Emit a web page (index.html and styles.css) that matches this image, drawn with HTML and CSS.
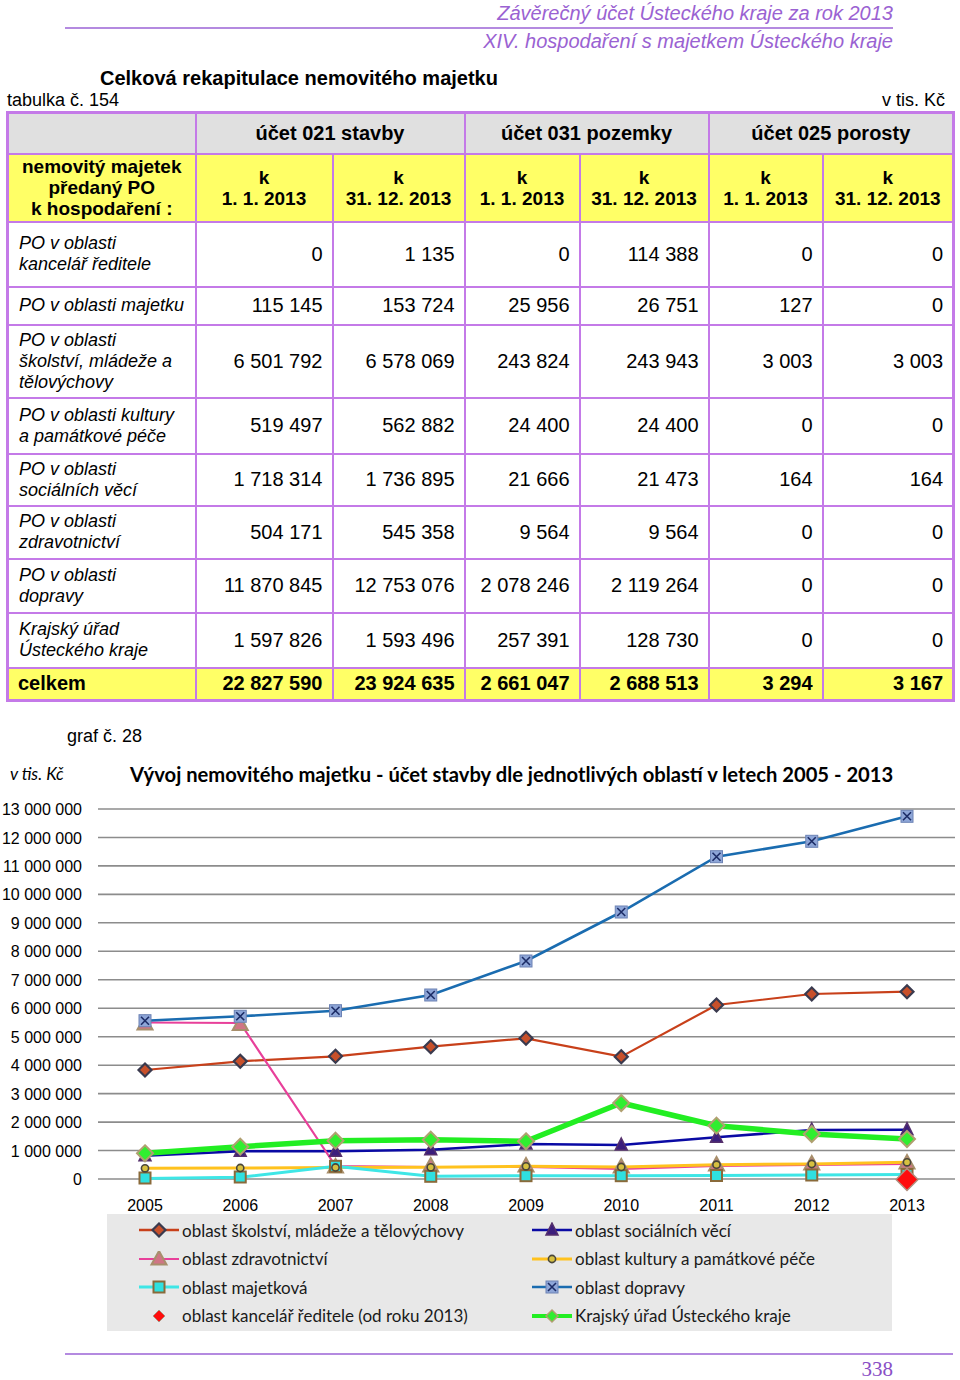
FILE: index.html
```html
<!DOCTYPE html>
<html lang="cs">
<head>
<meta charset="utf-8">
<title>Celková rekapitulace nemovitého majetku</title>
<link rel="stylesheet" href="styles.css">
</head>
<body>
<div class="page">
  <header class="doc-head">
    <div class="doc-title">Závěrečný účet Ústeckého kraje za rok 2013</div>
    <div class="doc-sub">XIV. hospodaření s majetkem Ústeckého kraje</div>
  </header>

  <h1 class="tbl-title">Celková rekapitulace nemovitého majetku</h1>
  <div class="tbl-caption"><span>tabulka č. 154</span><span>v tis. Kč</span></div>

  <table class="rekap">
    <colgroup>
      <col class="c0"><col class="c1"><col class="c2"><col class="c3"><col class="c4"><col class="c5"><col class="c6">
    </colgroup>
    <tr class="h1">
      <th></th>
      <th colspan="2">účet 021 stavby</th>
      <th colspan="2">účet 031 pozemky</th>
      <th colspan="2">účet 025 porosty</th>
    </tr>
    <tr class="h2">
      <th>nemovitý majetek<br>předaný PO<br>k hospodaření :</th>
      <th>k<br>1. 1. 2013</th>
      <th>k<br>31. 12. 2013</th>
      <th>k<br>1. 1. 2013</th>
      <th>k<br>31. 12. 2013</th>
      <th>k<br>1. 1. 2013</th>
      <th>k<br>31. 12. 2013</th>
    </tr>
    <tr class="r1"><td class="lbl">PO v oblasti<br>kancelář ředitele</td><td>0</td><td>1 135</td><td>0</td><td>114 388</td><td>0</td><td>0</td></tr>
    <tr class="r2"><td class="lbl">PO v oblasti majetku</td><td>115 145</td><td>153 724</td><td>25 956</td><td>26 751</td><td>127</td><td>0</td></tr>
    <tr class="r3"><td class="lbl">PO v oblasti<br>školství, mládeže a<br>tělovýchovy</td><td>6 501 792</td><td>6 578 069</td><td>243 824</td><td>243 943</td><td>3 003</td><td>3 003</td></tr>
    <tr class="r4"><td class="lbl">PO v oblasti kultury<br>a památkové péče</td><td>519 497</td><td>562 882</td><td>24 400</td><td>24 400</td><td>0</td><td>0</td></tr>
    <tr class="r5"><td class="lbl">PO v oblasti<br>sociálních věcí</td><td>1 718 314</td><td>1 736 895</td><td>21 666</td><td>21 473</td><td>164</td><td>164</td></tr>
    <tr class="r6"><td class="lbl">PO v oblasti<br>zdravotnictví</td><td>504 171</td><td>545 358</td><td>9 564</td><td>9 564</td><td>0</td><td>0</td></tr>
    <tr class="r7"><td class="lbl">PO v oblasti<br>dopravy</td><td>11 870 845</td><td>12 753 076</td><td>2 078 246</td><td>2 119 264</td><td>0</td><td>0</td></tr>
    <tr class="r8"><td class="lbl">Krajský úřad<br>Ústeckého kraje</td><td>1 597 826</td><td>1 593 496</td><td>257 391</td><td>128 730</td><td>0</td><td>0</td></tr>
    <tr class="total"><td class="lbl">celkem</td><td>22 827 590</td><td>23 924 635</td><td>2 661 047</td><td>2 688 513</td><td>3 294</td><td>3 167</td></tr>
  </table>

  <div class="graf-no">graf č. 28</div>
  <div class="chart-head">
    <span class="unit">v tis. Kč</span>
    <span class="chart-title">Vývoj nemovitého majetku - účet stavby dle jednotlivých oblastí v letech 2005 - 2013</span>
  </div>

  <svg class="chart" width="960" height="420" viewBox="0 795 960 420">
    <defs>
      <g id="m-skol"><path d="M0,-6.5 L6.5,0 L0,6.5 L-6.5,0Z" fill="#c8502a" stroke="#3a3a4e" stroke-width="2.2"/></g>
      <g id="m-zdrav"><path d="M0,-8 L7.5,5.5 L-7.5,5.5Z" fill="#d07585" stroke="#a88f6c" stroke-width="2"/></g>
      <g id="m-soc"><path d="M0,-7 L6,5 L-6,5Z" fill="#3c1e7c" stroke="#55306c" stroke-width="1.5"/></g>
      <g id="m-kult"><circle r="3.6" fill="#d6c040" stroke="#4a463a" stroke-width="1.6"/></g>
      <g id="m-maj"><rect x="-5.5" y="-5.5" width="11" height="11" fill="#2fe0e0" stroke="#8a6a3a" stroke-width="2"/></g>
      <g id="m-dop"><rect x="-6" y="-6" width="12" height="12" fill="#8ea6d8" stroke="#6c82b4" stroke-width="1"/><path d="M-4,-4 L4,4 M4,-4 L-4,4" stroke="#1c2c66" stroke-width="1.6"/></g>
      <g id="m-kanc"><path d="M0,-11 L11,0 L0,11 L-11,0Z" fill="#ff0d0d" stroke="#b09080" stroke-width="1.5"/></g>
      <g id="m-kraj"><path d="M0,-8 L8,0 L0,8 L-8,0Z" fill="#30ee30" stroke="#b0a070" stroke-width="2"/></g>
    </defs>

    <g class="grid" stroke="#8c8c8c" stroke-width="1.6">
      <line x1="98" x2="955" y1="810" y2="810"/>
      <line x1="98" x2="955" y1="838.5" y2="838.5"/>
      <line x1="98" x2="955" y1="866.9" y2="866.9"/>
      <line x1="98" x2="955" y1="895.4" y2="895.4"/>
      <line x1="98" x2="955" y1="923.8" y2="923.8"/>
      <line x1="98" x2="955" y1="952.3" y2="952.3"/>
      <line x1="98" x2="955" y1="980.8" y2="980.8"/>
      <line x1="98" x2="955" y1="1009.2" y2="1009.2"/>
      <line x1="98" x2="955" y1="1037.7" y2="1037.7"/>
      <line x1="98" x2="955" y1="1066.2" y2="1066.2"/>
      <line x1="98" x2="955" y1="1094.6" y2="1094.6"/>
      <line x1="98" x2="955" y1="1123.1" y2="1123.1"/>
      <line x1="98" x2="955" y1="1151.5" y2="1151.5"/>
      <line x1="98" x2="955" y1="1180" y2="1180"/>
    </g>

    <g class="ylab">
      <text x="82" y="816">13 000 000</text>
      <text x="82" y="844.5">12 000 000</text>
      <text x="82" y="872.9">11 000 000</text>
      <text x="82" y="901.4">10 000 000</text>
      <text x="82" y="929.8">9 000 000</text>
      <text x="82" y="958.3">8 000 000</text>
      <text x="82" y="986.8">7 000 000</text>
      <text x="82" y="1015.2">6 000 000</text>
      <text x="82" y="1043.7">5 000 000</text>
      <text x="82" y="1072.2">4 000 000</text>
      <text x="82" y="1100.6">3 000 000</text>
      <text x="82" y="1129.1">2 000 000</text>
      <text x="82" y="1157.5">1 000 000</text>
      <text x="82" y="1186">0</text>
    </g>

    <g class="xlab">
      <text x="145" y="1212">2005</text>
      <text x="240.25" y="1212">2006</text>
      <text x="335.5" y="1212">2007</text>
      <text x="430.75" y="1212">2008</text>
      <text x="526" y="1212">2009</text>
      <text x="621.25" y="1212">2010</text>
      <text x="716.5" y="1212">2011</text>
      <text x="811.75" y="1212">2012</text>
      <text x="907" y="1212">2013</text>
    </g>

    <!-- školství -->
    <polyline fill="none" stroke="#c8401a" stroke-width="2.2" points="145,1071 240.25,1062.3 335.5,1057.3 430.75,1047.7 526,1039.3 621.25,1057.7 716.5,1006 811.75,995 907,992.7"/>
    <!-- sociálních věcí -->
    <polyline fill="none" stroke="#0a0aa4" stroke-width="2.6" points="145,1156.7 240.25,1152.3 335.5,1152.3 430.75,1150.7 526,1145 621.25,1146 716.5,1138.3 811.75,1131 907,1130.7"/>
    <!-- zdravotnictví -->
    <polyline fill="none" stroke="#e8409a" stroke-width="2.2" points="145,1023.5 240.25,1024 335.5,1167 430.75,1168 526,1168 621.25,1170 716.5,1167 811.75,1166 907,1165"/>
    <!-- kultury -->
    <polyline fill="none" stroke="#ffc21e" stroke-width="3" points="145,1169.3 240.25,1169 335.5,1168.5 430.75,1168.3 526,1167.3 621.25,1168 716.5,1165.7 811.75,1165 907,1163.3"/>
    <!-- majetková -->
    <polyline fill="none" stroke="#3ee6e6" stroke-width="3" points="145,1179.5 240.25,1178.3 335.5,1167.3 430.75,1177.3 526,1176.7 621.25,1176.7 716.5,1176.5 811.75,1176 907,1175.5"/>
    <!-- dopravy -->
    <polyline fill="none" stroke="#1a6cb0" stroke-width="2.6" points="145,1021.7 240.25,1017.3 335.5,1011.7 430.75,996 526,962 621.25,913 716.5,857.7 811.75,842.3 907,817.3"/>
    <!-- Krajský úřad -->
    <polyline fill="none" stroke="#22ee22" stroke-width="5.5" stroke-linejoin="round" points="145,1154.3 240.25,1147.7 335.5,1141.7 430.75,1140.7 526,1142.3 621.25,1104 716.5,1126.7 811.75,1135 907,1140"/>

    <g class="mk">
      <use href="#m-skol" x="145" y="1071"/><use href="#m-skol" x="240.25" y="1062.3"/><use href="#m-skol" x="335.5" y="1057.3"/><use href="#m-skol" x="430.75" y="1047.7"/><use href="#m-skol" x="526" y="1039.3"/><use href="#m-skol" x="621.25" y="1057.7"/><use href="#m-skol" x="716.5" y="1006"/><use href="#m-skol" x="811.75" y="995"/><use href="#m-skol" x="907" y="992.7"/>

      <use href="#m-soc" x="145" y="1156.7"/><use href="#m-soc" x="240.25" y="1152.3"/><use href="#m-soc" x="335.5" y="1152.3"/><use href="#m-soc" x="430.75" y="1150.7"/><use href="#m-soc" x="526" y="1145"/><use href="#m-soc" x="621.25" y="1146"/><use href="#m-soc" x="716.5" y="1138.3"/><use href="#m-soc" x="811.75" y="1131"/><use href="#m-soc" x="907" y="1130.7"/>

      <use href="#m-zdrav" x="145" y="1025"/><use href="#m-zdrav" x="240.25" y="1025.5"/><use href="#m-zdrav" x="335.5" y="1168"/><use href="#m-zdrav" x="430.75" y="1167"/><use href="#m-zdrav" x="526" y="1167"/><use href="#m-zdrav" x="621.25" y="1168"/><use href="#m-zdrav" x="716.5" y="1166"/><use href="#m-zdrav" x="811.75" y="1165"/><use href="#m-zdrav" x="907" y="1164"/>

      <use href="#m-maj" x="145" y="1179"/><use href="#m-maj" x="240.25" y="1178"/><use href="#m-maj" x="335.5" y="1167.3"/><use href="#m-maj" x="430.75" y="1177.3"/><use href="#m-maj" x="526" y="1176.7"/><use href="#m-maj" x="621.25" y="1176.7"/><use href="#m-maj" x="716.5" y="1176.5"/><use href="#m-maj" x="811.75" y="1176"/><use href="#m-maj" x="907" y="1175.5"/>

      <use href="#m-kult" x="145" y="1169.3"/><use href="#m-kult" x="240.25" y="1169"/><use href="#m-kult" x="335.5" y="1168.5"/><use href="#m-kult" x="430.75" y="1168.3"/><use href="#m-kult" x="526" y="1167.3"/><use href="#m-kult" x="621.25" y="1168"/><use href="#m-kult" x="716.5" y="1165.7"/><use href="#m-kult" x="811.75" y="1165"/><use href="#m-kult" x="907" y="1163.3"/>

      <use href="#m-dop" x="145" y="1021.7"/><use href="#m-dop" x="240.25" y="1017.3"/><use href="#m-dop" x="335.5" y="1011.7"/><use href="#m-dop" x="430.75" y="996"/><use href="#m-dop" x="526" y="962"/><use href="#m-dop" x="621.25" y="913"/><use href="#m-dop" x="716.5" y="857.7"/><use href="#m-dop" x="811.75" y="842.3"/><use href="#m-dop" x="907" y="817.3"/>

      <use href="#m-kraj" x="145" y="1154.3"/><use href="#m-kraj" x="240.25" y="1147.7"/><use href="#m-kraj" x="335.5" y="1141.7"/><use href="#m-kraj" x="430.75" y="1140.7"/><use href="#m-kraj" x="526" y="1142.3"/><use href="#m-kraj" x="621.25" y="1104"/><use href="#m-kraj" x="716.5" y="1126.7"/><use href="#m-kraj" x="811.75" y="1135"/><use href="#m-kraj" x="907" y="1140"/>

      <use href="#m-kanc" x="907" y="1180.5"/>
    </g>
  </svg>

  <div class="legend">
    <div class="lg-item">
      <svg class="lg-key" width="40" height="16" viewBox="-20 -8 40 16"><line x1="-20" x2="20" y1="0" y2="0" stroke="#c8401a" stroke-width="2.5"/><use href="#m-skol"/></svg>
      <span>oblast školství, mládeže a tělovýchovy</span>
    </div>
    <div class="lg-item">
      <svg class="lg-key" width="40" height="16" viewBox="-20 -8 40 16"><line x1="-20" x2="20" y1="0" y2="0" stroke="#0a0aa4" stroke-width="2.6"/><use href="#m-soc"/></svg>
      <span>oblast sociálních věcí</span>
    </div>
    <div class="lg-item">
      <svg class="lg-key" width="40" height="16" viewBox="-20 -8 40 16"><line x1="-20" x2="20" y1="0" y2="0" stroke="#e8409a" stroke-width="2.2"/><use href="#m-zdrav"/></svg>
      <span>oblast zdravotnictví</span>
    </div>
    <div class="lg-item">
      <svg class="lg-key" width="40" height="16" viewBox="-20 -8 40 16"><line x1="-20" x2="20" y1="0" y2="0" stroke="#ffc21e" stroke-width="3"/><use href="#m-kult"/></svg>
      <span>oblast kultury a památkové péče</span>
    </div>
    <div class="lg-item">
      <svg class="lg-key" width="40" height="16" viewBox="-20 -8 40 16"><line x1="-20" x2="20" y1="0" y2="0" stroke="#3ee6e6" stroke-width="3"/><use href="#m-maj"/></svg>
      <span>oblast majetková</span>
    </div>
    <div class="lg-item">
      <svg class="lg-key" width="40" height="16" viewBox="-20 -8 40 16"><line x1="-20" x2="20" y1="0" y2="0" stroke="#1a6cb0" stroke-width="2.6"/><use href="#m-dop"/></svg>
      <span>oblast dopravy</span>
    </div>
    <div class="lg-item">
      <svg class="lg-key" width="40" height="16" viewBox="-20 -8 40 16"><path d="M0,-6 L6,0 L0,6 L-6,0Z" fill="#ff0d0d" stroke="#b09080" stroke-width="1"/></svg>
      <span>oblast kancelář ředitele (od roku 2013)</span>
    </div>
    <div class="lg-item">
      <svg class="lg-key" width="40" height="16" viewBox="-20 -8 40 16"><line x1="-20" x2="20" y1="0" y2="0" stroke="#22ee22" stroke-width="4"/><path d="M0,-6 L6,0 L0,6 L-6,0Z" fill="#30ee30" stroke="#b0a070" stroke-width="1.5"/></svg>
      <span>Krajský úřad Ústeckého kraje</span>
    </div>
  </div>

  <footer class="page-foot">338</footer>
</div>
</body>
</html>
```

FILE: styles.css
```css
* { box-sizing: border-box; }

body {
  margin: 0;
  background: #fff;
  color: #000;
  font-family: "Liberation Sans", Arial, sans-serif;
}

.page {
  width: 960px;
  height: 1380px;
  overflow: hidden;
}

/* document header */
.doc-head {
  color: #9a62d2;
  font-style: italic;
  font-size: 20px;
  text-align: right;
  padding-right: 67px;
}
.doc-title {
  margin-left: 65px;
  line-height: 27px;
  border-bottom: 2px solid #b48ae0;
}
.doc-sub {
  line-height: 24px;
}

.tbl-title {
  margin: 13px 0 0;
  padding-left: 100px;
  font-size: 20px;
  line-height: 24px;
  font-weight: bold;
}

.tbl-caption {
  display: flex;
  justify-content: space-between;
  padding: 0 15px 0 7px;
  font-size: 18px;
  line-height: 20px;
}

/* table */
.rekap {
  margin: 1px 0 0 6px;
  width: 943px;
  table-layout: fixed;
  border-collapse: collapse;
  border: 3px solid #c47ae8;
  font-size: 20px;
}
.rekap .c0 { width: 188px; }
.rekap .c1 { width: 137px; }
.rekap .c2 { width: 132px; }
.rekap .c3 { width: 115px; }
.rekap .c4 { width: 129px; }
.rekap .c5 { width: 114px; }
.rekap .c6 { width: 131px; }

.rekap th,
.rekap td {
  border: 2px solid #c47ae8;
  padding: 0 9px;
  vertical-align: middle;
}
.rekap th {
  font-weight: bold;
  text-align: center;
  line-height: 21px;
}
.rekap td {
  text-align: right;
  line-height: 21px;
}
.rekap td.lbl {
  text-align: left;
  font-style: italic;
  font-size: 18px;
  padding-left: 10px;
}

.rekap .h1 th { background: #e0e0e0; height: 41px; font-size: 20px; }
.rekap .h2 th { background: #ffff66; height: 68px; font-size: 19px; }
.rekap .h2 th:first-child { padding: 0 2px; }
.rekap .r1 td { height: 65px; }
.rekap .r2 td { height: 38px; }
.rekap .r3 td { height: 73px; }
.rekap .r4 td { height: 56px; }
.rekap .r5 td { height: 52px; }
.rekap .r6 td { height: 53px; }
.rekap .r7 td { height: 54px; }
.rekap .r8 td { height: 55px; }
.rekap .total td {
  height: 33px;
  background: #ffff66;
  font-weight: bold;
  font-size: 20px;
}
.rekap .total td.lbl { font-style: normal; font-size: 20px; padding-left: 9px; }

/* chart */
.graf-no {
  margin-top: 24px;
  padding-left: 67px;
  font-size: 18px;
  line-height: 20px;
}

.chart-head {
  margin-top: 16px;
  display: grid;
  grid-template-columns: 130px auto;
  line-height: 24px;
  align-items: center;
}
.chart-head .unit {
  padding-left: 10px;
  font-family: Lato, "Open Sans", sans-serif;
  font-style: italic;
  font-size: 17px;
}
.chart-head .chart-title {
  font-family: Lato, "Open Sans", sans-serif;
  font-weight: bold;
  font-size: 20.2px;
  white-space: nowrap;
}

.chart {
  display: block;
  margin-top: 8px;
}
.chart text {
  font-family: "Liberation Sans", Arial, sans-serif;
  font-size: 16px;
  fill: #000;
}
.chart .ylab text { text-anchor: end; }
.chart .xlab text { text-anchor: middle; }

.legend {
  margin-left: 107px;
  width: 785px;
  height: 117px;
  padding: 2px 0 0 0;
  background: #e8e8e8;
  display: grid;
  grid-template-columns: 425px auto;
  grid-auto-rows: 28.5px;
  font-family: Lato, "Open Sans", sans-serif;
  font-size: 17px;
  color: #1a1a1a;
}
.lg-item {
  display: flex;
  align-items: center;
}
.lg-item:nth-child(odd) { padding-left: 32px; }
.lg-key {
  flex: none;
  margin-right: 3px;
}

.page-foot {
  margin: 22px 7px 0 65px;
  border-top: 2px solid #b48ae0;
  padding-right: 60px;
  text-align: right;
  font-family: "Liberation Serif", "Times New Roman", serif;
  font-size: 21px;
  line-height: 28px;
  color: #8a4fc6;
}
```
